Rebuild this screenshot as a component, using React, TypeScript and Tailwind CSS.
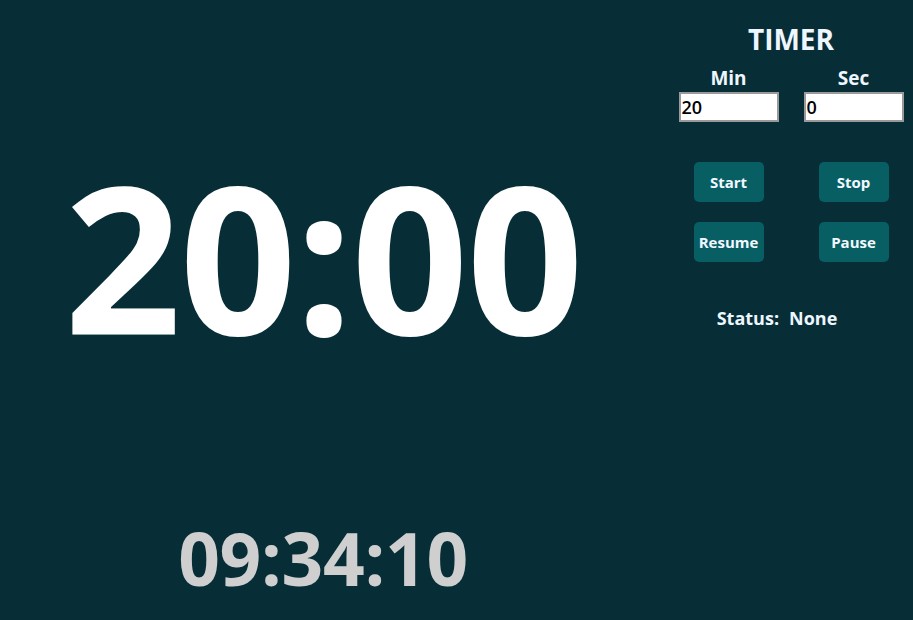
export default function App() {
  return (
    <div className="flex h-[620px] w-[913px] overflow-hidden bg-[#072e36] font-['Open_Sans',sans-serif] text-white">
      <div className="flex w-[645px] shrink-0 flex-col items-center">
        <div className="mt-[153px] pl-[1px] text-[205px] font-bold leading-none tracking-[-2px]">20:00</div>
        <div className="mt-auto mb-[26px] pl-[1px] text-[73px] font-bold leading-none tracking-[-0.3px] text-[#cfcfcf]">09:34:10</div>
      </div>
      <div className="flex w-[268px] shrink-0 flex-col items-center pl-[24px]">
        <h1 className="mt-[22px] text-[28px] font-bold leading-[34px] text-[#eef6ff]">TIMER</h1>
        <div className="mt-[10px] grid w-[250px] shrink-0 grid-cols-2">
          <label className="flex flex-col items-center">
            <span className="text-[19px] font-bold leading-[24px] text-[#eef6ff]">Min</span>
            <input
              defaultValue="20"
              className="mt-[2px] h-[30px] w-[100px] border-2 border-[#9a9a9a] bg-white px-[1px] text-[18px] font-semibold text-black outline-none"
            />
          </label>
          <label className="flex flex-col items-center">
            <span className="text-[19px] font-bold leading-[24px] text-[#eef6ff]">Sec</span>
            <input
              defaultValue="0"
              className="mt-[2px] h-[30px] w-[100px] border-2 border-[#9a9a9a] bg-white px-[1px] text-[18px] font-semibold text-black outline-none"
            />
          </label>
        </div>
        <div className="mt-[40px] grid w-[250px] shrink-0 grid-cols-2 gap-y-[20px]">
          {["Start", "Stop", "Resume", "Pause"].map((b) => (
            <div key={b} className="flex justify-center">
              <button className="h-[40px] w-[70px] rounded-[5px] bg-[#075e63] text-[15px] font-bold text-[#f2f8ff]">
                {b}
              </button>
            </div>
          ))}
        </div>
        <div className="mt-[44px] mr-[28px] flex gap-[10px] text-[18px] font-bold leading-[24px] text-[#eef6ff]">
          <span>Status:</span>
          <span>None</span>
        </div>
      </div>
    </div>
  );
}
